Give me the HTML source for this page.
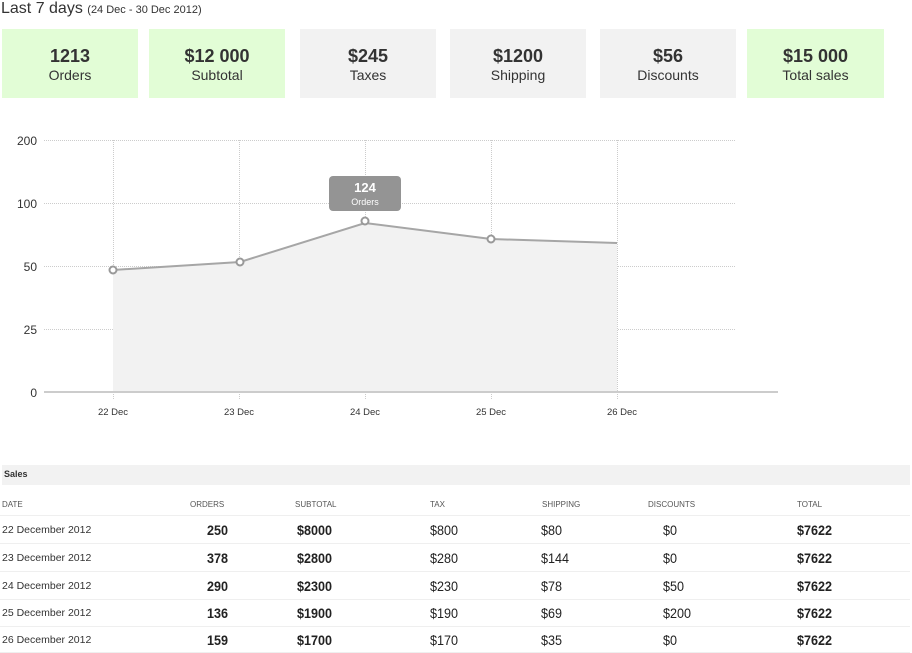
<!DOCTYPE html>
<html><head><meta charset="utf-8"><style>
body{margin:0;width:912px;height:653px;overflow:hidden;background:#fff;font-family:"Liberation Sans",Arial,sans-serif;color:#333;position:relative}
.a{position:absolute;white-space:nowrap}
.box{position:absolute;top:29px;height:69px;width:136px;text-align:center;background:#f2f2f2}
.g{background:#e2fdd6}
.box b{display:block;font-size:18px;margin-top:17px;line-height:20px}
.box span{display:block;font-size:14px;line-height:18px}
.h{font-size:8px;color:#555;top:500px}
.n{font-size:14px;color:#222;transform:scaleX(0.9);transform-origin:0 0}
.d{font-size:10.5px;color:#333}
.sep{position:absolute;left:0;width:910px;height:1px;background:#efefef}
</style></head><body>
<div class="a" style="left:1px;top:0;font-size:16px;color:#333">Last 7 days <span style="font-size:11px">(24 Dec - 30 Dec 2012)</span></div>
<div class="box g" style="left:2px"><b>1213</b><span>Orders</span></div>
<div class="box g" style="left:149px"><b>$12 000</b><span>Subtotal</span></div>
<div class="box" style="left:300px"><b>$245</b><span>Taxes</span></div>
<div class="box" style="left:450px"><b>$1200</b><span>Shipping</span></div>
<div class="box" style="left:600px"><b>$56</b><span>Discounts</span></div>
<div class="box g" style="left:747px;width:137px"><b>$15 000</b><span>Total sales</span></div>

<svg class="a" style="left:0;top:0" width="912" height="440">
<g stroke="#ccc" stroke-dasharray="1,1" stroke-width="1">
<line x1="44" y1="140.5" x2="736" y2="140.5"/><line x1="44" y1="203.5" x2="736" y2="203.5"/>
<line x1="44" y1="266.5" x2="736" y2="266.5"/><line x1="44" y1="329.5" x2="736" y2="329.5"/>
<line x1="113.5" y1="140" x2="113.5" y2="400"/><line x1="239.5" y1="140" x2="239.5" y2="400"/>
<line x1="365.5" y1="140" x2="365.5" y2="400"/><line x1="491.5" y1="140" x2="491.5" y2="400"/>
<line x1="617.5" y1="140" x2="617.5" y2="400"/>
</g>
<polygon points="113,270 240,262 365,223 491,239 617,243 617,392 113,392" fill="#f2f2f2"/>
<line x1="44" y1="392" x2="778" y2="392" stroke="#ccc" stroke-width="2"/>
<polyline points="113,270 240,262 365,223 491,239 617,243" fill="none" stroke="#a6a6a6" stroke-width="2"/>
<g fill="#fff" stroke="#999" stroke-width="2"><circle cx="113" cy="270" r="3.5"/><circle cx="240" cy="262" r="3.5"/><circle cx="365" cy="221" r="3.5"/><circle cx="491" cy="239" r="3.5"/></g>
<rect x="329" y="176" width="72" height="35" rx="4" fill="#949494"/>
<text x="365" y="192" fill="#fff" font-size="13" font-weight="bold" text-anchor="middle" font-family="Liberation Sans">124</text>
<text x="365" y="205" fill="#fff" font-size="9" text-anchor="middle" font-family="Liberation Sans">Orders</text>
<g font-size="12" fill="#333" text-anchor="end" font-family="Liberation Sans">
<text x="37" y="145">200</text><text x="37" y="208">100</text><text x="37" y="271">50</text><text x="37" y="334">25</text><text x="37" y="397">0</text></g>
<g font-size="9.5" fill="#333" text-anchor="middle" font-family="Liberation Sans">
<text x="113" y="415">22 Dec</text><text x="239" y="415">23 Dec</text><text x="365" y="415">24 Dec</text><text x="491" y="415">25 Dec</text><text x="622" y="415">26 Dec</text></g>
</svg>

<div class="a" style="left:2px;top:465px;width:908px;height:20px;background:#f2f2f2"></div>
<div class="a" style="left:4px;top:469px;font-size:9px;font-weight:bold;color:#333">Sales</div>
<div class="a h" style="left:2px">DATE</div><div class="a h" style="left:190px">ORDERS</div><div class="a h" style="left:295px">SUBTOTAL</div><div class="a h" style="left:430px">TAX</div><div class="a h" style="left:542px">SHIPPING</div><div class="a h" style="left:648px">DISCOUNTS</div><div class="a h" style="left:797px">TOTAL</div>
<div class="sep" style="top:515px"></div><div class="sep" style="top:543px"></div><div class="sep" style="top:571px"></div><div class="sep" style="top:599px"></div><div class="sep" style="top:626px"></div><div class="sep" style="top:652px"></div>

<div class="a" style="top:522px;left:0;width:912px">
<div class="a d" style="left:2px;top:2px">22 December 2012</div><div class="a n" style="left:207px;font-weight:bold">250</div><div class="a n" style="left:297px;font-weight:bold">$8000</div><div class="a n" style="left:430px">$800</div><div class="a n" style="left:541px">$80</div><div class="a n" style="left:663px">$0</div><div class="a n" style="left:797px;font-weight:bold">$7622</div></div>
<div class="a" style="top:550px;left:0;width:912px">
<div class="a d" style="left:2px;top:2px">23 December 2012</div><div class="a n" style="left:207px;font-weight:bold">378</div><div class="a n" style="left:297px;font-weight:bold">$2800</div><div class="a n" style="left:430px">$280</div><div class="a n" style="left:541px">$144</div><div class="a n" style="left:663px">$0</div><div class="a n" style="left:797px;font-weight:bold">$7622</div></div>
<div class="a" style="top:578px;left:0;width:912px">
<div class="a d" style="left:2px;top:2px">24 December 2012</div><div class="a n" style="left:207px;font-weight:bold">290</div><div class="a n" style="left:297px;font-weight:bold">$2300</div><div class="a n" style="left:430px">$230</div><div class="a n" style="left:541px">$78</div><div class="a n" style="left:663px">$50</div><div class="a n" style="left:797px;font-weight:bold">$7622</div></div>
<div class="a" style="top:605px;left:0;width:912px">
<div class="a d" style="left:2px;top:2px">25 December 2012</div><div class="a n" style="left:207px;font-weight:bold">136</div><div class="a n" style="left:297px;font-weight:bold">$1900</div><div class="a n" style="left:430px">$190</div><div class="a n" style="left:541px">$69</div><div class="a n" style="left:663px">$200</div><div class="a n" style="left:797px;font-weight:bold">$7622</div></div>
<div class="a" style="top:632px;left:0;width:912px">
<div class="a d" style="left:2px;top:2px">26 December 2012</div><div class="a n" style="left:207px;font-weight:bold">159</div><div class="a n" style="left:297px;font-weight:bold">$1700</div><div class="a n" style="left:430px">$170</div><div class="a n" style="left:541px">$35</div><div class="a n" style="left:663px">$0</div><div class="a n" style="left:797px;font-weight:bold">$7622</div></div>
</body></html>
